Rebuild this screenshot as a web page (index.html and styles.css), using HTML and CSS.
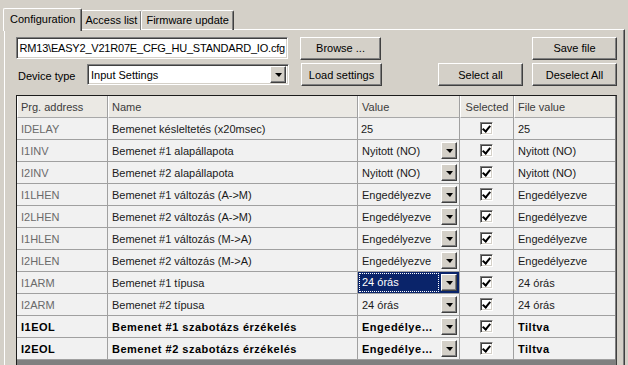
FILE: index.html
```html
<!DOCTYPE html>
<html lang="hu">
<head>
  <meta charset="UTF-8" />
  <title>Configuration</title>
  <link rel="stylesheet" href="styles.css">
</head>
<body>

<div class="tabs">
  <div class="tab active">Configuration</div>
  <div class="tab">Access list</div>
  <div class="tab">Firmware update</div>
</div>

<div class="panel">
  <div class="toolbar">
    <div class="field path"><span>RM13\EASY2_V21R07E_CFG_HU_STANDARD_IO.cfg</span></div>
    <button class="btn">Browse ...</button>
    <span class="spacer"></span>
    <button class="btn wide">Save file</button>
  </div>

  <div class="toolbar second">
    <label class="label">Device type</label>
    <div class="field combo">
      <span class="combo-text">Input Settings</span>
      <span class="drop"><i></i></span>
    </div>
    <button class="btn">Load settings</button>
    <span class="spacer"></span>
    <button class="btn wide">Select all</button>
    <button class="btn wide">Deselect All</button>
  </div>

  <div class="grid">
    <table>
      <colgroup>
        <col class="c-addr"><col class="c-name"><col class="c-value"><col class="c-sel"><col class="c-file">
      </colgroup>
      <thead>
        <tr>
          <th>Prg. address</th>
          <th>Name</th>
          <th>Value</th>
          <th class="center">Selected</th>
          <th>File value</th>
        </tr>
      </thead>
      <tbody id="rows">
      </tbody>
    </table>
  </div>
</div>

<script>
  // adatsorok
  const rows = [
    { addr: 'IDELAY', name: 'Bemenet késleltetés (x20msec)', value: '25', combo: false, file: '25' },
    { addr: 'I1INV', name: 'Bemenet #1 alapállapota', value: 'Nyitott (NO)', combo: true, file: 'Nyitott (NO)' },
    { addr: 'I2INV', name: 'Bemenet #2 alapállapota', value: 'Nyitott (NO)', combo: true, file: 'Nyitott (NO)' },
    { addr: 'I1LHEN', name: 'Bemenet #1 változás (A->M)', value: 'Engedélyezve', combo: true, file: 'Engedélyezve' },
    { addr: 'I2LHEN', name: 'Bemenet #2 változás (A->M)', value: 'Engedélyezve', combo: true, file: 'Engedélyezve' },
    { addr: 'I1HLEN', name: 'Bemenet #1 változás (M->A)', value: 'Engedélyezve', combo: true, file: 'Engedélyezve' },
    { addr: 'I2HLEN', name: 'Bemenet #2 változás (M->A)', value: 'Engedélyezve', combo: true, file: 'Engedélyezve' },
    { addr: 'I1ARM', name: 'Bemenet #1 típusa', value: '24 órás', combo: true, file: '24 órás', focus: true },
    { addr: 'I2ARM', name: 'Bemenet #2 típusa', value: '24 órás', combo: true, file: '24 órás' },
    { addr: 'I1EOL', name: 'Bemenet #1 szabotázs érzékelés', value: 'Engedélyezve', combo: true, file: 'Tiltva', bold: true },
    { addr: 'I2EOL', name: 'Bemenet #2 szabotázs érzékelés', value: 'Engedélyezve', combo: true, file: 'Tiltva', bold: true },
  ];

  const tbody = document.getElementById('rows');
  rows.forEach(r => {
    const tr = document.createElement('tr');
    if (r.bold) tr.classList.add('changed');
    const valueCell = r.combo
      ? `<div class="cell-combo ${r.focus ? 'focus' : ''}"><span class="cv">${r.value}</span><span class="drop"><i></i></span></div>`
      : r.value;
    tr.innerHTML = `
      <td class="addr">${r.addr}</td>
      <td>${r.name}</td>
      <td class="value ${r.focus ? 'active' : ''}">${valueCell}</td>
      <td class="center"><span class="check"></span></td>
      <td>${r.file}</td>
    `;
    tbody.appendChild(tr);
  });
</script>
</body>
</html>
```

FILE: styles.css
```css
* {
  box-sizing: border-box;
}
body {
  margin: 0;
  height: 365px;
  background-color: #d4d0c8;
  font-family: "Liberation Sans", Arial, sans-serif;
  font-size: 11px;
  color: #000;
  overflow: hidden;
}

/* tabs */
.tabs {
  display: flex;
  padding: 10px 0 0 5px;
  height: 30px;
  position: relative;
  z-index: 1;
}
.tab {
  height: 20px;
  padding: 3px 4px 0 4px;
  border-top: 1px solid #fff;
  border-left: 1px solid #fff;
  border-right: 1px solid #404040;
  box-shadow: inset -1px 0 #808080;
  border-radius: 2px 2px 0 0;
  margin-left: -1px;
}
.tab.active {
  height: 23px;
  margin-top: -2px;
  margin-left: -2px;
  margin-right: -1px;
  padding: 4px 6px 0 6px;
  background-color: #d4d0c8;
  position: relative;
  z-index: 2;
}

.panel {
  margin: -1px 3px 0 4px;
  height: 336px;
  border-top: 1px solid #fff;
  border-left: 1px solid #fff;
  border-right: 1px solid #404040;
  box-shadow: inset -1px 0 #808080;
  padding: 7px 7px 0 11px;
}

.toolbar {
  display: flex;
  align-items: center;
  height: 22px;
}
.toolbar.second {
  margin-top: 4px;
  height: 23px;
}
.spacer {
  flex: 1;
}

.field {
  background-color: #fff;
  border-top: 1px solid #808080;
  border-left: 1px solid #808080;
  border-bottom: 1px solid #fff;
  border-right: 1px solid #fff;
  box-shadow: inset 1px 1px #404040, inset -1px -1px #d4d0c8;
  height: 22px;
  display: flex;
  align-items: center;
  overflow: hidden;
  white-space: nowrap;
}
.path {
  width: 272px;
  justify-content: flex-end;
  padding: 0 2px 0 2px;
  letter-spacing: -0.2px;
}
.label {
  margin-left: 2px;
  width: 69px;
  padding-top: 3px;
}
.combo {
  width: 202px;
  height: 21px;
  padding: 0 2px 0 3px;
}
.combo-text {
  flex: 1;
}

.drop {
  width: 16px;
  height: 17px;
  background-color: #d4d0c8;
  border-top: 1px solid #fff;
  border-left: 1px solid #fff;
  border-right: 1px solid #404040;
  border-bottom: 1px solid #404040;
  box-shadow: inset -1px -1px #808080;
  display: flex;
  align-items: center;
  justify-content: center;
  flex-shrink: 0;
}
.drop i {
  width: 0;
  height: 0;
  border-left: 4px solid transparent;
  border-right: 3px solid transparent;
  border-top: 4px solid #000;
  margin-top: 1px;
}

.btn {
  font-family: inherit;
  font-size: 11px;
  color: #000;
  background-color: #d4d0c8;
  border-top: 1px solid #fff;
  border-left: 1px solid #fff;
  border-right: 1px solid #404040;
  border-bottom: 1px solid #404040;
  box-shadow: inset -1px -1px #808080;
  height: 23px;
  width: 81px;
  margin-left: 12px;
  padding: 0;
}
.btn.wide {
  width: 85px;
  margin-left: 9px;
}

/* grid */
.grid {
  margin-top: 9px;
  height: 270px;
  background-color: #808080;
  border-top: 1px solid #1c1c1c;
  border-left: 1px solid #1c1c1c;
  border-right: 1px solid #404040;
  overflow: hidden;
}
table {
  border-collapse: separate;
  border-spacing: 0;
  table-layout: fixed;
  width: 598px;
}
.c-addr { width: 91px; }
.c-name { width: 250px; }
.c-value { width: 102px; }
.c-sel { width: 54px; }
.c-file { width: 101px; }

th, td {
  height: 22px;
  padding: 0 4px;
  text-align: left;
  white-space: nowrap;
  overflow: hidden;
  text-overflow: ellipsis;
  border-right: 1px solid #a0a0a0;
  border-bottom: 1px solid #a0a0a0;
  background-color: #f1f1f1;
  color: #1a1a1a;
}
th {
  font-weight: normal;
  color: #3c3c3c;
  background-color: #ebe9e4;
  border-left: 1px solid #fff;
  border-bottom: 1px solid #a8a8a8;
  padding-left: 3px;
}
th.center, td.center {
  text-align: center;
  padding: 0;
}
td:last-child, th:last-child {
  border-right: none;
}
td.addr {
  color: #6a6a6a;
}
tr.changed td {
  font-weight: bold;
  color: #000;
  letter-spacing: 0.5px;
}

td.value {
  padding: 0 2px 0 3px;
}
.cell-combo {
  display: flex;
  align-items: center;
  height: 21px;
}
.cell-combo .cv {
  flex: 1;
  overflow: hidden;
  text-overflow: ellipsis;
  padding-left: 1px;
  padding-right: 4px;
}
td.value.active {
  background-color: #0a246a;
  padding: 0 2px 0 1px;
}
.cell-combo.focus .cv {
  color: #fff;
  height: 19px;
  line-height: 17px;
  border: 1px dotted #fff;
  margin-right: 2px;
  padding-left: 2px;
}

.check {
  display: inline-block;
  width: 13px;
  height: 13px;
  vertical-align: middle;
  background-color: #fff;
  border-top: 1px solid #808080;
  border-left: 1px solid #808080;
  border-bottom: 1px solid #fff;
  border-right: 1px solid #fff;
  box-shadow: inset 1px 1px #404040, inset -1px -1px #d4d0c8;
  position: relative;
}
.check::after {
  content: "";
  position: absolute;
  left: 3px;
  top: 1px;
  width: 3px;
  height: 6px;
  border-right: 2px solid #000;
  border-bottom: 2px solid #000;
  transform: rotate(40deg);
}
```
